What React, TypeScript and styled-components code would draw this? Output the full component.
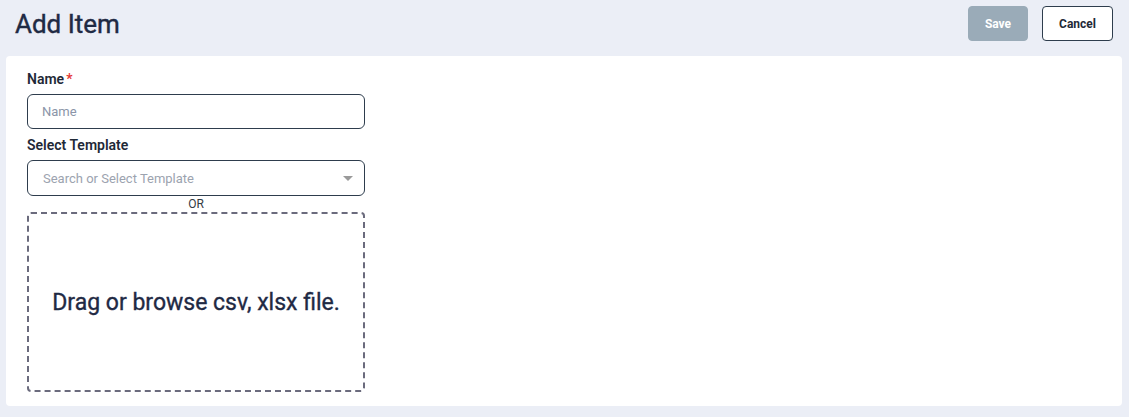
import styled, { createGlobalStyle } from "styled-components";

const GlobalStyle = createGlobalStyle`
  html, body {
    margin: 0;
    padding: 0;
    background: #ebeef6;
    font-family: Roboto, "Liberation Sans", sans-serif;
  }
  * {
    box-sizing: border-box;
  }
`;

const App = () => {
  return (
    <Page>
      <GlobalStyle />
      <Header>
        <Title>Add Item</Title>
        <Actions>
          <Button disabled>Save</Button>
          <Button $outline>Cancel</Button>
        </Actions>
      </Header>
      <Card>
        <Field>
          <Label>
            Name<Required>*</Required>
          </Label>
          <Input placeholder="Name" />
        </Field>
        <Field>
          <Label>Select Template</Label>
          <Select>
            <SelectPlaceholder>Search or Select Template</SelectPlaceholder>
            <Caret />
          </Select>
        </Field>
        <Or>OR</Or>
        <DropZone>Drag or browse csv, xlsx file.</DropZone>
      </Card>
    </Page>
  );
};

export default App;

const Page = styled.div`
  width: 1129px;
  height: 417px;
  padding: 6px 7px 11px 6px;
  display: flex;
  flex-direction: column;
`;

const Header = styled.div`
  display: flex;
  align-items: center;
  justify-content: space-between;
  height: 35px;
  margin-bottom: 15px;
  padding: 0 9px 0 9px;
`;

const Title = styled.h1`
  margin: 0;
  font-size: 26px;
  font-weight: 400;
  color: #1f2a44;
  -webkit-text-stroke: 0.4px #1f2a44;
`;

const Actions = styled.div`
  display: flex;
  gap: 14px;
`;

const Button = styled.button<{ $outline?: boolean }>`
  height: 35px;
  padding: 0 16px;
  min-width: 60px;
  border-radius: 4px;
  font-family: Roboto, "Liberation Sans", sans-serif;
  font-size: 12px;
  font-weight: 700;
  cursor: pointer;
  border: 1px solid ${(p) => (p.$outline ? "#2e3d4d" : "#9aabb8")};
  background: ${(p) => (p.$outline ? "#ffffff" : "#9aabb8")};
  color: ${(p) => (p.$outline ? "#1f2a37" : "#ffffff")};
  &:disabled {
    cursor: default;
  }
`;

const Card = styled.div`
  flex: 1;
  background: #ffffff;
  border-radius: 4px;
  padding: 15px 21px 14px 21px;
  display: flex;
  flex-direction: column;
  width: 1116px;
`;

const Field = styled.div`
  display: flex;
  flex-direction: column;
  width: 338px;
  margin-bottom: 8px;
`;

const Label = styled.label`
  font-size: 14px;
  font-weight: 600;
  color: #1f2937;
  line-height: 16px;
  margin-bottom: 7px;
`;

const Required = styled.span`
  color: #e53935;
  margin-left: 2px;
`;

const Input = styled.input`
  height: 35px;
  border: 1px solid #2e3d4d;
  border-radius: 6px;
  padding: 0 14px;
  font-family: Roboto, "Liberation Sans", sans-serif;
  font-size: 13px;
  color: #1f2937;
  outline: none;
  &::placeholder {
    color: #8b95a8;
  }
`;

const Select = styled.div`
  height: 36px;
  border: 1px solid #2e3d4d;
  border-radius: 6px;
  padding: 0 11px 0 15px;
  display: flex;
  align-items: center;
  justify-content: space-between;
`;

const SelectPlaceholder = styled.span`
  font-size: 13px;
  color: #9ca3af;
`;

const Caret = styled.span`
  width: 0;
  height: 0;
  border-left: 5.5px solid transparent;
  border-right: 5.5px solid transparent;
  border-top: 5.5px solid #9a9a9a;
`;

const Or = styled.div`
  width: 338px;
  text-align: center;
  font-size: 12px;
  color: #333a44;
  margin-top: -8px;
  line-height: 16px;
`;

const DropZone = styled.div`
  width: 338px;
  height: 180px;
  border: 2px dashed #6b6b7d;
  border-radius: 4px;
  display: flex;
  align-items: center;
  justify-content: center;
  font-size: 23px;
  font-weight: 400;
  color: #1f2a44;
  -webkit-text-stroke: 0.35px #1f2a44;
`;
